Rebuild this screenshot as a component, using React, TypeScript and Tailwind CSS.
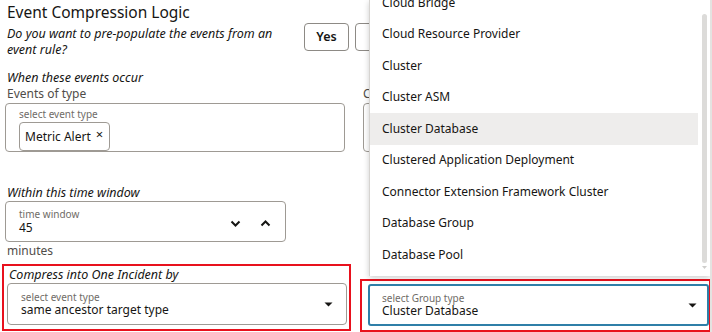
import React from "react";

const groupTypes = [
  "Cloud Bridge",
  "Cloud Resource Provider",
  "Cluster",
  "Cluster ASM",
  "Cluster Database",
  "Clustered Application Deployment",
  "Connector Extension Framework Cluster",
  "Database Group",
  "Database Pool",
];

function Caret() {
  return (
    <svg width="9" height="5" viewBox="0 0 9 5" className="shrink-0">
      <path d="M0.5 0.5 L8.5 0.5 L4.5 4.5 Z" fill="#161513" />
    </svg>
  );
}

function Chevron({ up }: { up?: boolean }) {
  return (
    <svg width="11" height="7" viewBox="0 0 11 7">
      <path
        d={up ? "M1.5 5.5 L5.5 1.5 L9.5 5.5" : "M1.5 1.5 L5.5 5.5 L9.5 1.5"}
        fill="none"
        stroke="#161513"
        strokeWidth="2"
      />
    </svg>
  );
}

export default function App() {
  const selected = "Cluster Database";

  return (
    <div
      className="relative w-[712px] h-[332px] overflow-hidden bg-white text-[#161513]"
      style={{ fontFamily: '"Noto Sans", "Open Sans", sans-serif' }}
    >
      <div className="pl-[7px] pt-[1px]">
        <div className="text-[15.5px] leading-[22px]">Event Compression Logic</div>
        <div className="flex items-start mt-[3px]">
          <p className="w-[297px] text-[12.5px] italic leading-[16px]">
            Do you want to pre-populate the events from an event rule?
          </p>
          <button className="h-[28px] w-[45px] -mt-[3px] rounded border border-[#8d8a85] text-[12.5px] font-semibold">
            Yes
          </button>
          {/* second choice sits under the open list; only its left edge shows */}
          <span className="block w-[14px] -mt-[3px] ml-[6px] overflow-hidden">
            <span className="block h-[28px] w-[45px] rounded border border-[#8d8a85]" />
          </span>
        </div>
      </div>

      <div className="flex mt-[12px]">
        {/* left column */}
        <div className="w-[351px] shrink-0">
          <div className="pl-[7px] text-[12.5px] italic leading-[16px]">When these events occur</div>
          <div className="pl-[7px] text-[12px] leading-[16px] text-[#4f4c48]">Events of type</div>
          <div className="ml-[5px] mt-[1px] w-[340px] h-[49px] rounded border border-[#9e9a94] pl-[13px] pt-[4px]">
            <div className="text-[10px] leading-[12px] text-[#6f6c67]">select event type</div>
            <div className="mt-[2px] inline-flex items-center h-[29px] rounded border border-[#9e9a94] pl-[5px] pr-[6px] gap-[5px] text-[12px]">
              Metric Alert
              <span className="text-[13px] leading-none -mt-[4px]">×</span>
            </div>
          </div>

          <div className="pl-[7px] mt-[33px] text-[12.5px] italic leading-[16px]">Within this time window</div>
          <div className="ml-[5px] w-[281px] h-[41px] rounded border border-[#9e9a94] flex items-center pl-[13px] pr-[14px]">
            <div className="flex-1">
              <div className="text-[10px] leading-[12px] text-[#6f6c67]">time window</div>
              <div className="mt-[1px] text-[12px] leading-[14px]">45</div>
            </div>
            <div className="flex items-center gap-[19px] mt-[3px]">
              <Chevron />
              <Chevron up />
            </div>
          </div>
          <div className="pl-[7px] text-[12px] leading-[17px] text-[#4f4c48]">minutes</div>

          <div className="ml-[2px] mt-[5px] w-[349px] h-[67px] border-2 border-[#e8111d] pl-[3px] pt-[1px]">
            <div className="pl-[2px] text-[12.5px] italic leading-[16px]">Compress into One Incident by</div>
            <div className="w-[340px] h-[42px] rounded border border-[#9e9a94] flex items-center pl-[13px] pr-[13px]">
              <div className="flex-1">
                <div className="text-[10px] leading-[12px] text-[#6f6c67]">select event type</div>
                <div className="text-[12px] leading-[14px]">same ancestor target type</div>
              </div>
              <Caret />
            </div>
          </div>
        </div>

        {/* right column (mostly under the open list) */}
        <div className="flex-1 pl-[12px]">
          <div className="h-[16px]" />
          <div className="w-[6px] overflow-hidden text-[12px] leading-[16px] text-[#4f4c48]">C</div>
          <div className="mt-[1px] h-[49px] rounded border border-[#9e9a94]" />
          <div className="mt-[127px] -ml-[3px] w-[351px] h-[53px] border-2 border-[#e8111d] pl-[6px] pt-[3px]">
            <div className="h-[42px] rounded-[3px] border-2 border-[#2f7fa8] flex items-center pl-[12px] pr-[10px]">
              <div className="flex-1">
                <div className="text-[10px] leading-[12px] text-[#6f6c67]">select Group type</div>
                <div className="text-[12px] leading-[14px]">{selected}</div>
              </div>
              <Caret />
            </div>
          </div>
        </div>
      </div>

      {/* open list of group types */}
      <div className="absolute left-[369px] top-0 w-[341px] h-[276px] bg-white border-l border-[#d6d4d1] shadow-[0_2px_6px_rgba(0,0,0,0.2)] overflow-hidden">
        <div className="-mt-[13px] pr-[12px]">
          {groupTypes.map((g) => (
            <div
              key={g}
              className={
                "h-[31.5px] flex items-center pl-[12px] text-[12px] " +
                (g === selected ? "bg-[#eeedec]" : "")
              }
            >
              {g}
            </div>
          ))}
        </div>
        <div className="absolute right-[3px] top-[14px] w-[5px] h-[249px] rounded-full bg-[#dcdbd9]" />
        <svg className="absolute right-[3px] top-[266px]" width="5" height="4" viewBox="0 0 5 4">
          <path d="M0 0 L5 0 L2.5 3 Z" fill="#cfcecc" />
        </svg>
      </div>
      <div className="absolute right-0 top-0 w-[2px] h-full bg-[#e4e3e1]" />
    </div>
  );
}
